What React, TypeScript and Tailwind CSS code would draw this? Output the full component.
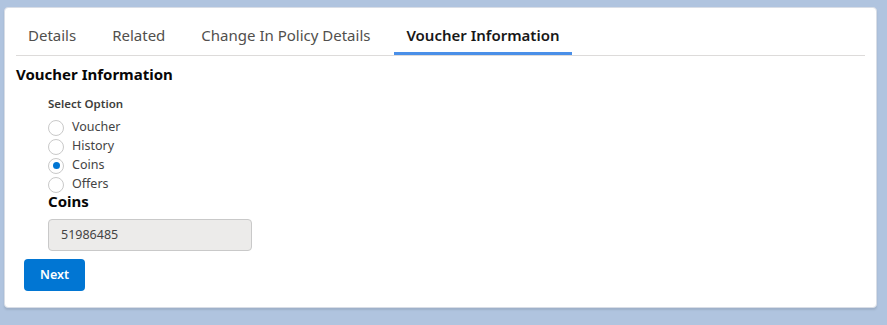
import { useState } from 'react';

const tabs = ['Details', 'Related', 'Change In Policy Details', 'Voucher Information'];
const options = ['Voucher', 'History', 'Coins', 'Offers'];

export default function App() {
  const [active, setActive] = useState('Voucher Information');
  const [choice, setChoice] = useState('Coins');

  return (
    <div
      className="w-[887px] h-[325px] bg-[#b0c4df] pt-[7px] pl-[4px] pr-[10px]"
      style={{ fontFamily: '"Noto Sans", "Open Sans", sans-serif' }}
    >
      <div className="w-[873px] h-[301px] bg-white rounded-[4px] border border-[#d8dde6] shadow-[0_2px_2px_rgba(0,0,0,0.1)] px-[11px]">
        {/* Tabs */}
        <div className="flex gap-[12px] border-b border-[#dddbda] h-[48px] mr-[0px]">
          {tabs.map((t) => (
            <button
              key={t}
              onClick={() => setActive(t)}
              className={`h-full px-[12px] text-[15px] leading-none flex items-end pb-[9px] -mb-px border-b-[3px] ${
                active === t
                  ? 'border-[#4a8fe8] font-semibold text-[#181818]'
                  : 'border-transparent text-[#514f4d]'
              }`}
            >
              {t}
            </button>
          ))}
        </div>

        <h2 className="mt-[8px] text-[15px] font-bold text-[#080707] leading-[20px]">Voucher Information</h2>

        {/* Radio group */}
        <div className="pl-[32px] mt-[12px]">
          <div className="text-[11.5px] font-semibold text-[#3e3e3c] leading-[16px]">Select Option</div>
          <div className="flex flex-col mt-[6px]">
            {options.map((o) => (
              <label key={o} className="flex items-center h-[19px] cursor-pointer" onClick={() => setChoice(o)}>
                <span className="w-[16px] h-[16px] rounded-full border border-[#c9c9c9] bg-white flex items-center justify-center">
                  {choice === o && <span className="w-[7px] h-[7px] rounded-full bg-[#0176d3]" />}
                </span>
                <span className="ml-[8px] text-[12.5px] text-[#444444]">{o}</span>
              </label>
            ))}
          </div>

          <div className="text-[15px] font-bold text-[#080707] leading-[20px] -mt-[3px]">Coins</div>
          <div className="mt-[8px] w-[204px] h-[32px] bg-[#ecebea] border border-[#c9c9c9] rounded-[4px] flex items-center pl-[12px] text-[12.5px] text-[#444444]">
            51986485
          </div>
        </div>

        <button className="ml-[8px] mt-[8px] w-[61px] h-[32px] bg-[#0176d3] rounded-[4px] text-white text-[12.5px] font-semibold">
          Next
        </button>
      </div>
    </div>
  );
}
